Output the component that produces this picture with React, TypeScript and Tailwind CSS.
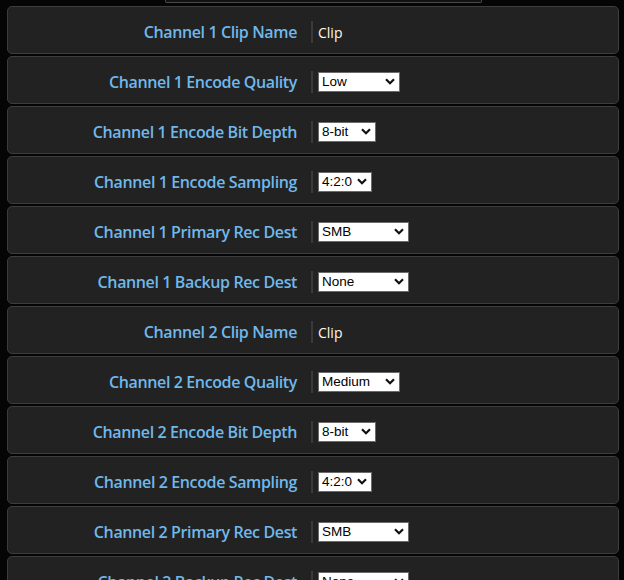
const rows: { label: string; text?: string; value?: string; w?: string }[] = [
  { label: "Channel 1 Clip Name", text: "Clip" },
  { label: "Channel 1 Encode Quality", value: "Low", w: "w-[82px]" },
  { label: "Channel 1 Encode Bit Depth", value: "8-bit", w: "w-[58px]" },
  { label: "Channel 1 Encode Sampling", value: "4:2:0", w: "w-[54px]" },
  { label: "Channel 1 Primary Rec Dest", value: "SMB", w: "w-[91px]" },
  { label: "Channel 1 Backup Rec Dest", value: "None", w: "w-[91px]" },
  { label: "Channel 2 Clip Name", text: "Clip" },
  { label: "Channel 2 Encode Quality", value: "Medium", w: "w-[82px]" },
  { label: "Channel 2 Encode Bit Depth", value: "8-bit", w: "w-[58px]" },
  { label: "Channel 2 Encode Sampling", value: "4:2:0", w: "w-[54px]" },
  { label: "Channel 2 Primary Rec Dest", value: "SMB", w: "w-[91px]" },
  { label: "Channel 2 Backup Rec Dest", value: "None", w: "w-[91px]" },
];

const FakeSelect = ({ value, w }: { value: string; w: string }) => (
  <div
    className={`${w} h-[20px] bg-white border border-[#6b6b6b] flex items-center justify-between pl-[3px] pr-[4px] text-[13.5px] text-black leading-none font-['Liberation_Sans',Arial,sans-serif]`}
  >
    <span>{value}</span>
    <svg width="10" height="7" viewBox="0 0 10 7" className="shrink-0">
      <path d="M1 1.2 L5 5.2 L9 1.2" stroke="#111" strokeWidth="2.2" fill="none" />
    </svg>
  </div>
);

export default function App() {
  return (
    <div className="w-[624px] h-[580px] overflow-hidden bg-[#050505]">
      <div className="ml-[165px] w-[317px] h-[3px] bg-[#111] border-x border-b border-[#4a4a4a] rounded-b-[2px]" />
      <div className="pt-[3px] px-[7px] flex flex-col gap-[2px]">
        {rows.map((r, i) => (
          <div
            key={i}
            className="h-[48px] w-[612px] shrink-0 bg-[#222222] border border-[#3d3d3d] rounded-[5px] flex items-center pt-[3px]"
          >
            <div className="w-[289px] text-right font-['Open_Sans',sans-serif] font-semibold text-[16px] text-[#70b8ea] tracking-[-0.38px]">
              {r.label}
            </div>
            <div className="ml-[14px] w-[2px] h-[22px] bg-[#3a3a3a]" />
            <div className="ml-[5px]">
              {r.text ? (
                <span className="text-[14px] text-[#fff9ec] font-['Open_Sans',sans-serif]">{r.text}</span>
              ) : (
                <FakeSelect value={r.value!} w={r.w!} />
              )}
            </div>
          </div>
        ))}
      </div>
    </div>
  );
}
